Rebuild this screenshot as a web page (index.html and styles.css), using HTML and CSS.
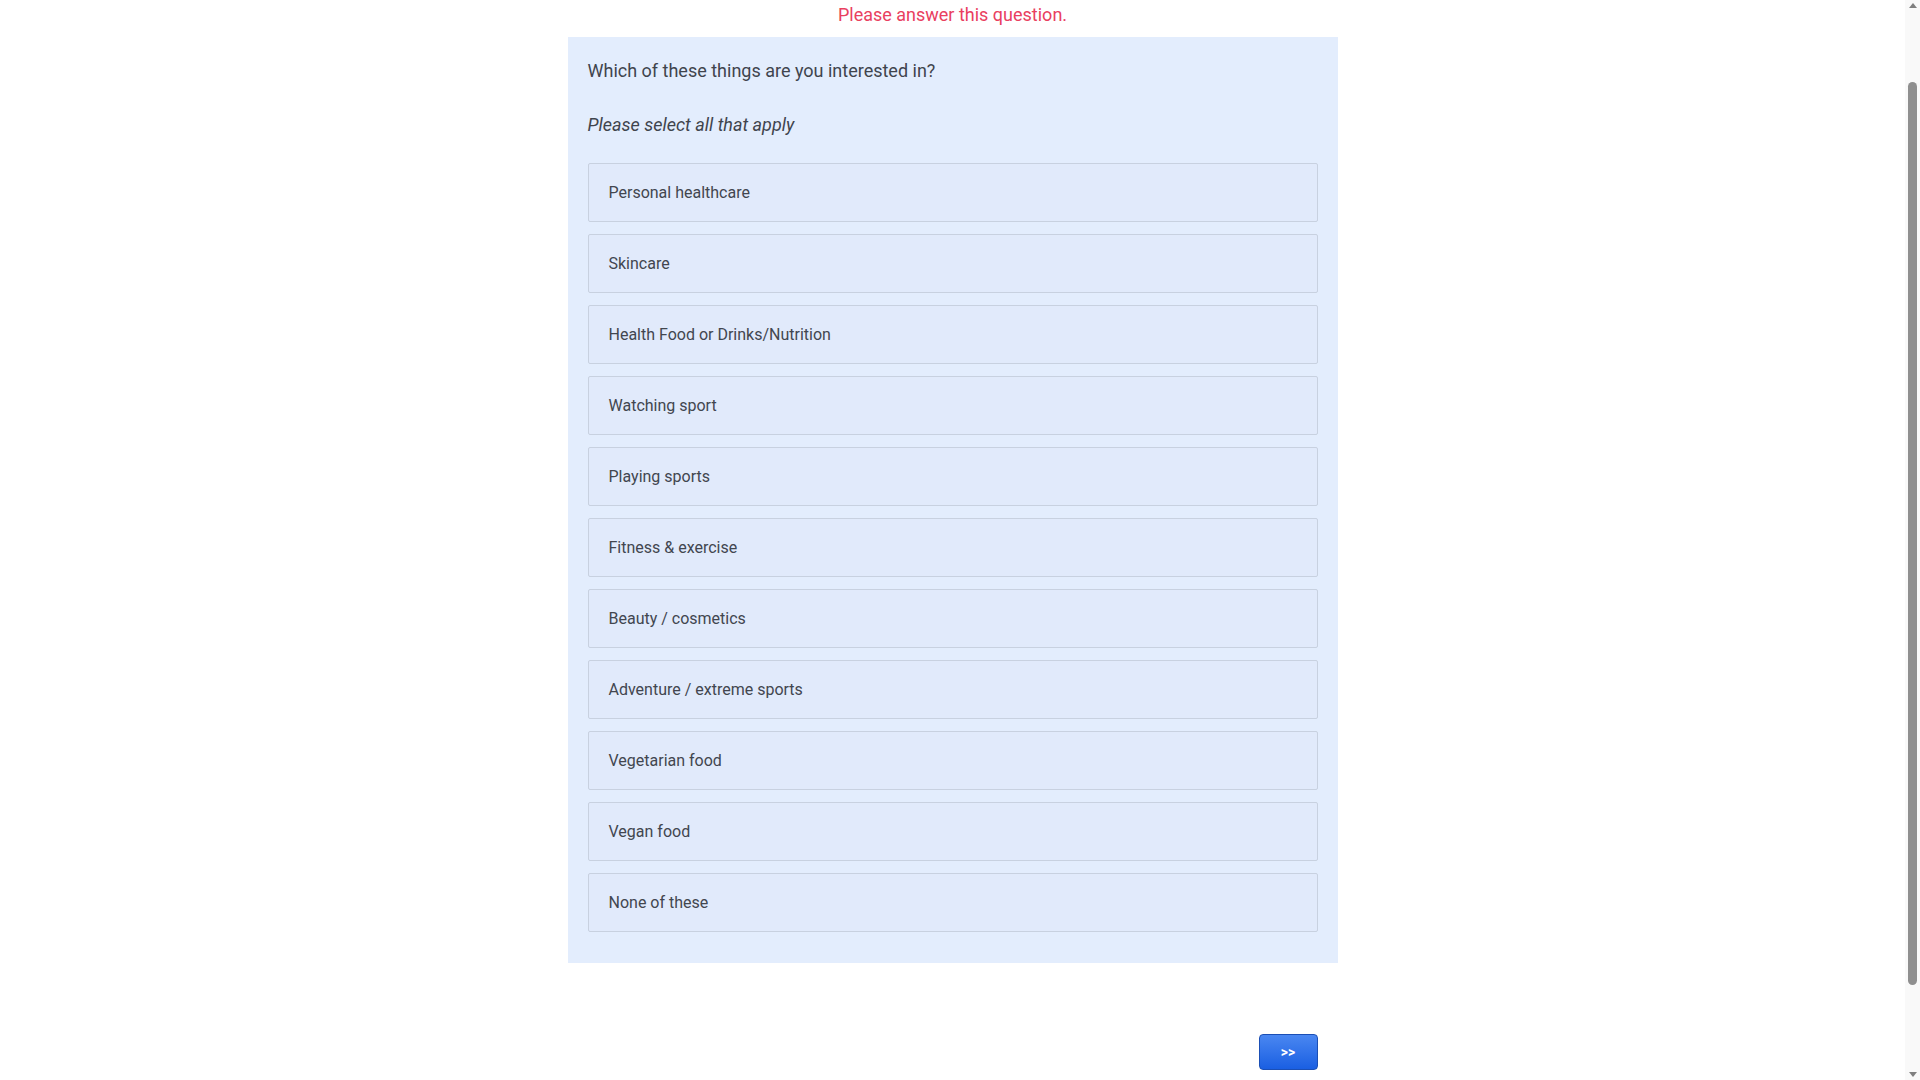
FILE: index.html
```html
<!DOCTYPE html>
<html lang="en">
<head>
<meta charset="utf-8">
<title>Survey</title>
<link rel="stylesheet" href="styles.css">
</head>
<body>
<div class="page">
  <div class="survey">
    <p class="error">Please answer this question.</p>
    <div class="question">
      <p class="question-text">Which of these things are you interested in?</p>
      <p class="instruction">Please select all that apply</p>
      <div class="options">
        <div class="option">Personal healthcare</div>
        <div class="option">Skincare</div>
        <div class="option">Health Food or Drinks/Nutrition</div>
        <div class="option">Watching sport</div>
        <div class="option">Playing sports</div>
        <div class="option">Fitness &amp; exercise</div>
        <div class="option">Beauty / cosmetics</div>
        <div class="option">Adventure / extreme sports</div>
        <div class="option">Vegetarian food</div>
        <div class="option">Vegan food</div>
        <div class="option">None of these</div>
      </div>
    </div>
    <div class="nav">
      <button class="next" type="button">&gt;&gt;</button>
    </div>
  </div>
</div>
<div class="scrollbar" aria-hidden="true">
  <div class="sb-btn sb-up"><span class="tri-up"></span></div>
  <div class="sb-track"><div class="sb-thumb"></div></div>
  <div class="sb-btn sb-down"><span class="tri-down"></span></div>
</div>
<script src="script.js"></script>
</body>
</html>
```

FILE: styles.css
```css
html, body {
  margin: 0;
  padding: 0;
  background: #ffffff;
}
body {
  font-family: Roboto, "Liberation Sans", Arial, sans-serif;
  color: #3f444d;
}
.page {
  padding-top: 83px;
  padding-bottom: 106px;
  margin-right: 15px;
}
.survey {
  width: 770px;
  margin: 0 auto;
}
.error {
  margin: 0 0 10px;
  text-align: center;
  color: #e9405f;
  font-size: 18px;
  line-height: 24px;
}
.question {
  background: #e3edfd;
  padding: 20px 20px 31px;
}
.question-text {
  margin: 0 0 27px;
  font-size: 18px;
  line-height: 27px;
  color: #3f444d;
}
.instruction {
  margin: 0 0 25px;
  font-size: 18px;
  line-height: 27px;
  font-style: italic;
  color: #3f444d;
}
.options {
  display: flex;
  flex-direction: column;
  gap: 12px;
}
.option {
  box-sizing: border-box;
  height: 59px;
  display: flex;
  align-items: center;
  padding: 0 20px;
  background: #e1eafb;
  border: 1px solid #c8d1e0;
  border-radius: 2px;
  font-size: 16px;
  color: #42464f;
}
.nav {
  display: flex;
  justify-content: flex-end;
  padding: 71px 20px 0 0;
}
.next {
  box-sizing: border-box;
  width: 59px;
  height: 36px;
  border: 1px solid #1b4fb5;
  border-radius: 4px;
  background: linear-gradient(#4a87f1, #1a5fe2);
  color: #ffffff;
  font-family: Roboto, "Liberation Sans", Arial, sans-serif;
  font-size: 14px;
  font-weight: bold;
  padding: 0;
  cursor: pointer;
}

/* browser scrollbar overlay */
.scrollbar {
  position: fixed;
  top: 0;
  right: 0;
  bottom: 0;
  width: 15px;
  background: #f9f9f9;
  display: flex;
  flex-direction: column;
}
.sb-btn {
  height: 15px;
  display: flex;
  align-items: center;
  justify-content: center;
  flex: none;
}
.tri-up {
  width: 0;
  height: 0;
  border-left: 4.5px solid transparent;
  border-right: 4.5px solid transparent;
  border-bottom: 5px solid #7f7f7f;
  margin-top: -4px;
}
.tri-down {
  width: 0;
  height: 0;
  border-left: 4.5px solid transparent;
  border-right: 4.5px solid transparent;
  border-top: 5px solid #7f7f7f;
  margin-top: 4px;
}
.sb-track {
  flex: 1;
  padding: 67px 3px 80px 3px;
  display: flex;
}
.sb-thumb {
  flex: 1;
  background: #8f8f8f;
  border-radius: 5px;
}
```

FILE: script.js
```js
window.scrollTo(0, 80);
window.addEventListener('load', function () { window.scrollTo(0, 80); });
```
